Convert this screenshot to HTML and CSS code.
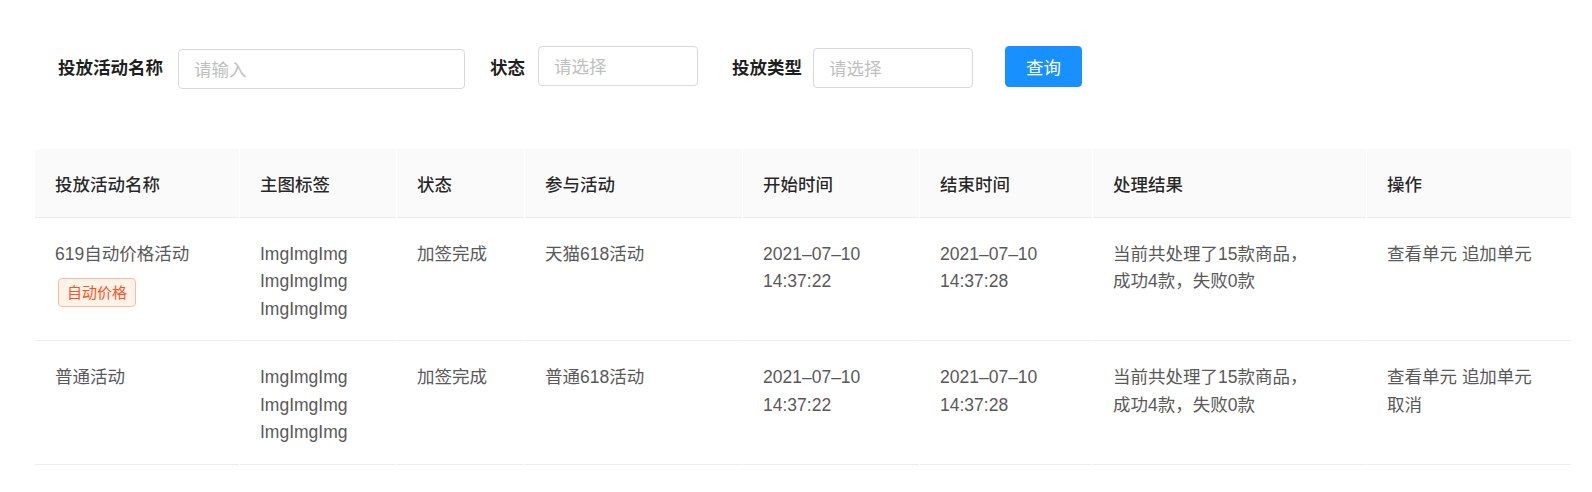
FILE: index.html
```html
<!DOCTYPE html>
<html lang="zh-CN">
<head>
<meta charset="utf-8">
<title>投放活动</title>
<link rel="stylesheet" href="styles.css">
</head>
<body>
<div class="page">
  <form class="filter">
    <div class="item item-name">
      <label class="label">投放活动名称</label>
      <div class="input input-wide"><span class="placeholder">请输入</span></div>
    </div>
    <div class="item item-status">
      <label class="label">状态</label>
      <div class="input input-select input-up"><span class="placeholder">请选择</span></div>
    </div>
    <div class="item item-type">
      <label class="label">投放类型</label>
      <div class="input input-select"><span class="placeholder">请选择</span></div>
    </div>
    <button type="button" class="btn-primary">查询</button>
  </form>

  <table class="table">
    <colgroup>
      <col class="c1">
      <col class="c2">
      <col class="c3">
      <col class="c4">
      <col class="c5">
      <col class="c6">
      <col class="c7">
      <col class="c8">
    </colgroup>
    <thead>
      <tr>
        <th class="first">投放活动名称</th>
        <th>主图标签</th>
        <th>状态</th>
        <th>参与活动</th>
        <th>开始时间</th>
        <th>结束时间</th>
        <th>处理结果</th>
        <th class="last">操作</th>
      </tr>
    </thead>
    <tbody>
      <tr>
        <td>619自动价格活动<div><span class="tag">自动价格</span></div></td>
        <td>ImgImgImg ImgImgImg ImgImgImg</td>
        <td>加签完成</td>
        <td>天猫618活动</td>
        <td>2021–07–10<br>14:37:22</td>
        <td>2021–07–10<br>14:37:28</td>
        <td>当前共处理了15款商品，<br>成功4款，失败0款</td>
        <td><a class="link">查看单元</a> <a class="link">追加单元</a></td>
      </tr>
      <tr>
        <td>普通活动</td>
        <td>ImgImgImg ImgImgImg ImgImgImg</td>
        <td>加签完成</td>
        <td>普通618活动</td>
        <td>2021–07–10<br>14:37:22</td>
        <td>2021–07–10<br>14:37:28</td>
        <td>当前共处理了15款商品，<br>成功4款，失败0款</td>
        <td><a class="link">查看单元</a> <a class="link">追加单元</a><br><a class="link">取消</a></td>
      </tr>
    </tbody>
  </table>
</div>
</body>
</html>
```

FILE: styles.css
```css
* { box-sizing: border-box; }

body {
  margin: 0;
  background: #fff;
  font-family: "Liberation Sans", "Noto Sans CJK SC", sans-serif;
  font-size: 17.5px;
  line-height: 27.5px;
  color: rgba(0, 0, 0, 0.65);
}

.page {
  padding: 47px 20px 0 34px;
}

.filter {
  display: flex;
  align-items: center;
  padding-left: 24px;
  height: 40px;
}

.item {
  display: flex;
  align-items: center;
}

.item-status { margin-left: 25px; }
.item-type { margin-left: 34px; }

.label {
  font-family: "Noto Sans CJK SC", sans-serif;
  font-weight: 700;
  color: rgba(0, 0, 0, 0.88);
  margin-right: 15px;
  white-space: nowrap;
}

.item-status .label { margin-right: 13px; }
.item-type .label { margin-right: 11px; }

.input {
  height: 40px;
  border: 1px solid #d9d9d9;
  border-radius: 4px;
  padding: 0 15px;
  display: flex;
  align-items: center;
  background: #fff;
}

.input-wide { width: 287px; margin-top: 3px; }
.input-select { width: 160px; margin-top: 1px; }
.input-up { margin-top: -2px; }

.placeholder {
  color: #bfbfbf;
  font-family: "Noto Sans CJK SC", sans-serif;
}

.btn-primary {
  margin-left: 32px;
  width: 77px;
  height: 41px;
  margin-top: -2px;
  border: 1px solid #1890ff;
  border-radius: 4px;
  background: #1890ff;
  color: #fff;
  font-family: "Noto Sans CJK SC", sans-serif;
  font-size: 17.5px;
  padding: 0;
}

.table {
  margin-top: 62px;
  width: 1538px;
  table-layout: fixed;
  border-collapse: separate;
  border-spacing: 1px 0;
}

.c1 { width: 204px; }
.c2 { width: 156px; }
.c3 { width: 127px; }
.c4 { width: 217px; }
.c5 { width: 176px; }
.c6 { width: 172px; }
.c7 { width: 273px; }
.c8 { width: 204px; }

.table th {
  background: #fafafa;
  color: rgba(0, 0, 0, 0.85);
  font-weight: 500;
  text-align: left;
  padding: 23px 20px 17px;
  height: 68px;
  border-bottom: 1px solid #ececec;
}

.table th.first { border-top-left-radius: 4px; }
.table th.last { border-top-right-radius: 4px; }

.table td {
  vertical-align: top;
  padding: 23px 20px 17px;
  border-bottom: 1px solid #ececec;
  color: #595959;
  word-break: break-word;
}

.tag {
  display: inline-block;
  margin-top: 10px;
  margin-left: 3px;
  padding: 0 8px;
  font-size: 15px;
  line-height: 27px;
  color: #fa541c;
  background: #fff2e8;
  border: 1px solid #ffbb96;
  border-radius: 4px;
}

.link {
  color: #595959;
  text-decoration: none;
}
```
